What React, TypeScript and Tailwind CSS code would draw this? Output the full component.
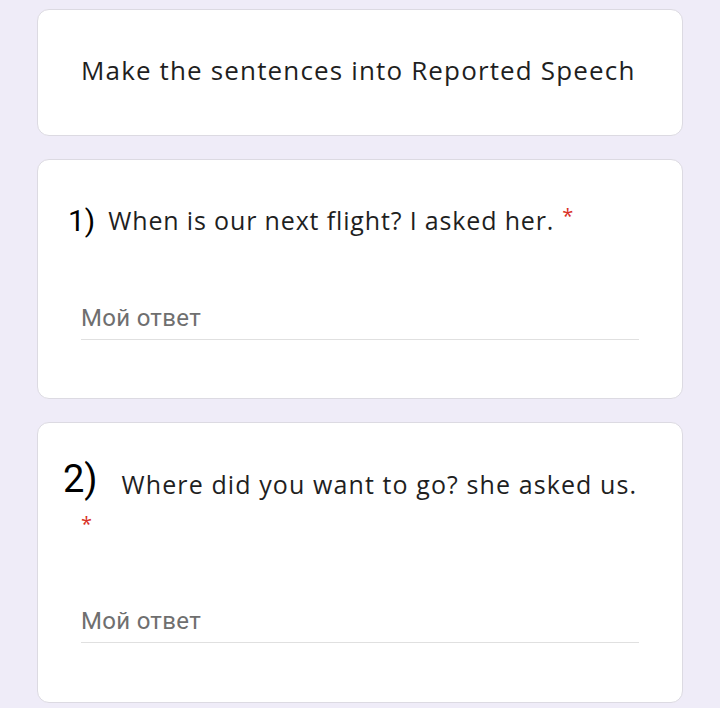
export default function App() {
  const sans = { fontFamily: '"Open Sans", "Liberation Sans", sans-serif' };
  return (
    <div className="w-[720px] h-[708px] overflow-hidden bg-[#efecf8] pt-[9px] flex flex-col gap-[23px]" style={sans}>
      <div className="mx-[37px] h-[127px] bg-white rounded-[12px] border border-[#dcdae2] flex items-center px-[43px]">
        <h1 className="text-[26px] text-[#1f1f1f] tracking-[1.15px] -mt-[4px] whitespace-nowrap">Make the sentences into Reported Speech</h1>
      </div>

      <div className="mx-[37px] h-[240px] bg-white rounded-[12px] border border-[#dcdae2] pt-[40px]">
        <div className="flex items-center pl-[30px] pr-[20px]">
          <span className="text-[30px] text-black leading-none font-['Roboto'] mt-[2px]">1)</span>
          <span className="ml-[13px] text-[25px] text-[#1f1f1f] leading-[40px] tracking-[0.85px] whitespace-nowrap">When is our next flight? I asked her.</span>
          <span className="ml-[8px] text-[20px] text-[#d93025] -mt-[8px]">*</span>
        </div>
        <div className="mx-[43px] mt-[63px] border-b border-[#e0e0e0] pb-[6px]">
          <span className="text-[24px] text-[#6f6f6f] font-['Roboto'] leading-[30px] tracking-[0.3px]">Мой ответ</span>
        </div>
      </div>

      <div className="mx-[37px] flex-1 mb-[5px] bg-white rounded-[12px] border border-[#dcdae2] pt-[31px]">
        <div className="flex items-center pl-[25px] pr-[10px]">
          <span className="text-[38px] text-black leading-none font-['Roboto']">2)</span>
          <span className="ml-[24px] mt-[10px] text-[25px] text-[#1f1f1f] leading-[40px] tracking-[1.1px] whitespace-nowrap">Where did you want to go? she asked us.</span>
        </div>
        <div className="pl-[43px] mt-[8px] text-[20px] leading-[24px] text-[#d93025]">*</div>
        <div className="mx-[43px] mt-[70px] border-b border-[#e0e0e0] pb-[6px]">
          <span className="text-[24px] text-[#6f6f6f] font-['Roboto'] leading-[30px] tracking-[0.3px]">Мой ответ</span>
        </div>
      </div>
    </div>
  );
}
